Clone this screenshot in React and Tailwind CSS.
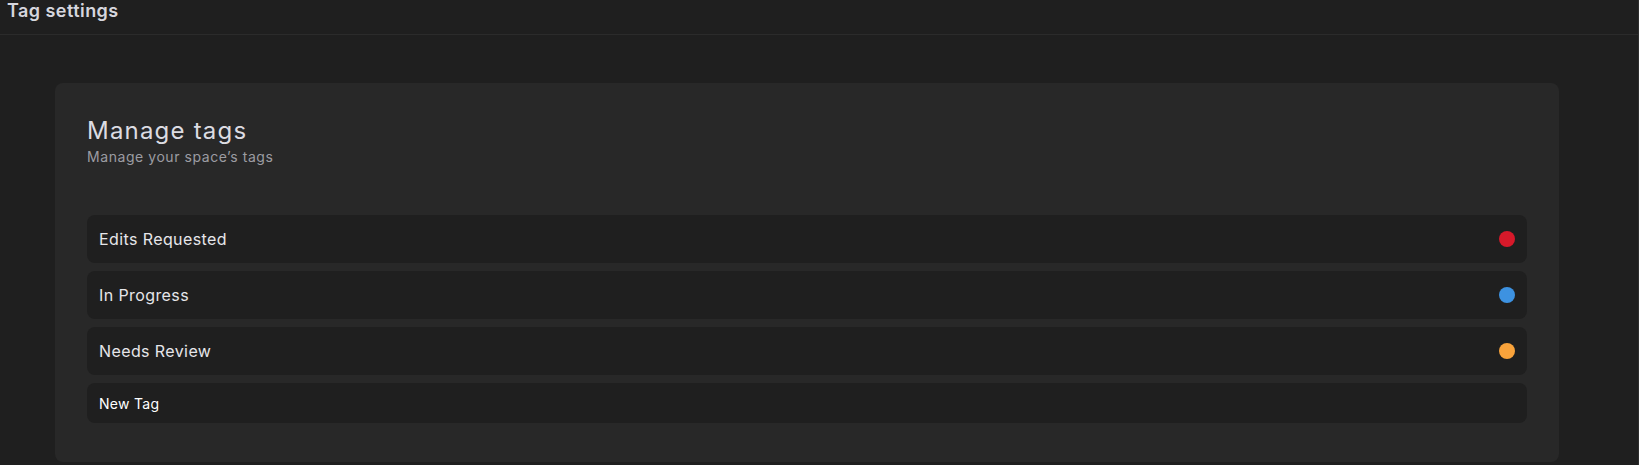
import React, { useState } from 'react'

const TAGS = [
  { name: 'Edits Requested', color: 'bg-[#d7192a]' },
  { name: 'In Progress', color: 'bg-[#3d92e1]' },
  { name: 'Needs Review', color: 'bg-[#f9a33b]' },
]

export default function App() {
  const [draft, setDraft] = useState('New Tag')

  return (
    <div className="min-h-[465px] border-r border-[#2e2e2e] bg-[#1f1f1f] font-['Inter',sans-serif] text-[#e4e4e8]">
      <header className="h-[35px] border-b border-[#2b2b2b] px-[7px]">
        <h1 className="text-[18px] font-semibold leading-[21px] tracking-[0.025em] text-[#d6d6de]">Tag settings</h1>
      </header>

      <div className="pl-[55px] pr-[79px] pt-[48px]">
        <section className="rounded-[8px] bg-[#282828] px-8 pt-[33px] pb-[39px]">
          <h2 className="text-[24px] leading-[30px] tracking-[0.05em] text-[#dcdce2]">Manage tags</h2>
          <p className="mt-[2px] text-[14px] leading-[18px] tracking-[0.04em] text-[#9c9ca2]">Manage your space’s tags</p>

          <div className="mt-[49px] flex flex-col gap-2">
            {TAGS.map(tag => (
              <div key={tag.name} className="flex h-12 items-center justify-between rounded-[8px] bg-[#1f1f1f] px-3">
                <span className="text-[16px] tracking-[0.025em] text-[#e6e6ea]">{tag.name}</span>
                <span className={`h-4 w-4 rounded-full ${tag.color}`} />
              </div>
            ))}
            <input
              value={draft}
              onChange={e => setDraft(e.target.value)}
              className="h-10 rounded-[8px] bg-[#1f1f1f] px-3 text-[14px] tracking-[0.02em] text-white caret-white outline-none"
              autoFocus
            />
          </div>
        </section>
      </div>
    </div>
  )
}
